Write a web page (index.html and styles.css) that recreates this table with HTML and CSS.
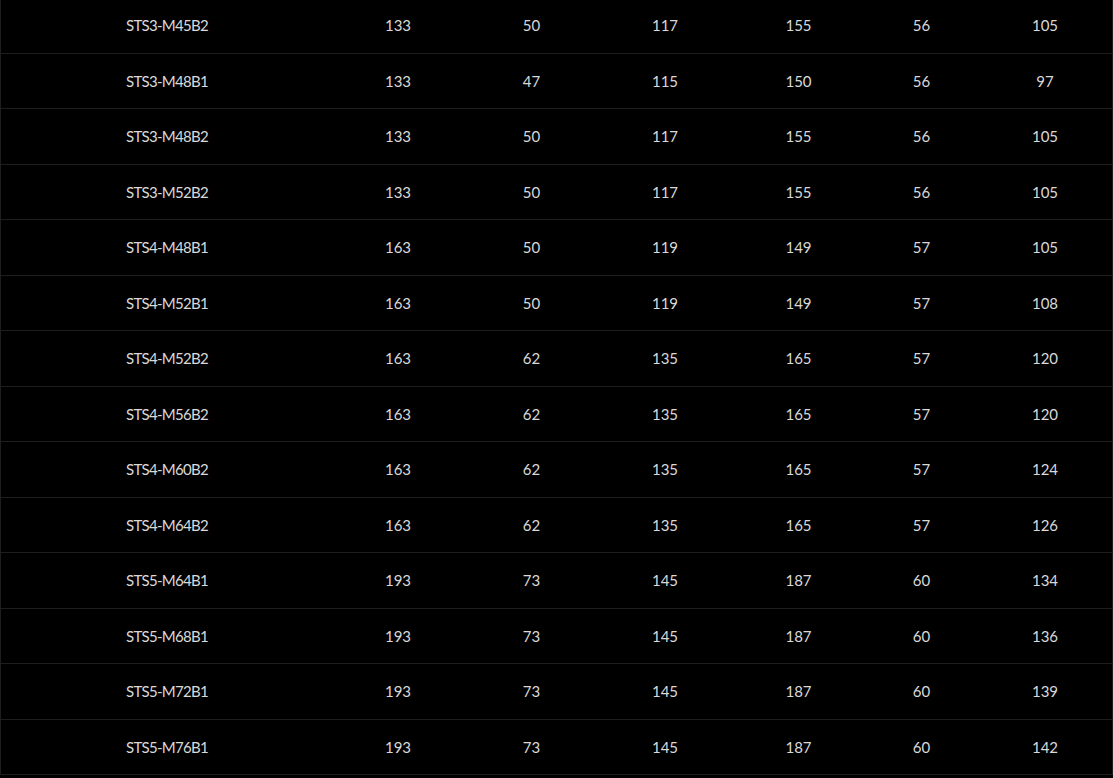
FILE: index.html
```html
<!DOCTYPE html>
<html>
<head>
<meta charset="utf-8">
<link rel="stylesheet" href="styles.css">
</head>
<body>
<div class="table">
  <div class="row"><div class="name">STS3-M45B2</div><div>133</div><div>50</div><div>117</div><div>155</div><div>56</div><div>105</div></div>
  <div class="row"><div class="name">STS3-M48B1</div><div>133</div><div>47</div><div>115</div><div>150</div><div>56</div><div>97</div></div>
  <div class="row"><div class="name">STS3-M48B2</div><div>133</div><div>50</div><div>117</div><div>155</div><div>56</div><div>105</div></div>
  <div class="row"><div class="name">STS3-M52B2</div><div>133</div><div>50</div><div>117</div><div>155</div><div>56</div><div>105</div></div>
  <div class="row"><div class="name">STS4-M48B1</div><div>163</div><div>50</div><div>119</div><div>149</div><div>57</div><div>105</div></div>
  <div class="row"><div class="name">STS4-M52B1</div><div>163</div><div>50</div><div>119</div><div>149</div><div>57</div><div>108</div></div>
  <div class="row"><div class="name">STS4-M52B2</div><div>163</div><div>62</div><div>135</div><div>165</div><div>57</div><div>120</div></div>
  <div class="row"><div class="name">STS4-M56B2</div><div>163</div><div>62</div><div>135</div><div>165</div><div>57</div><div>120</div></div>
  <div class="row"><div class="name">STS4-M60B2</div><div>163</div><div>62</div><div>135</div><div>165</div><div>57</div><div>124</div></div>
  <div class="row"><div class="name">STS4-M64B2</div><div>163</div><div>62</div><div>135</div><div>165</div><div>57</div><div>126</div></div>
  <div class="row"><div class="name">STS5-M64B1</div><div>193</div><div>73</div><div>145</div><div>187</div><div>60</div><div>134</div></div>
  <div class="row"><div class="name">STS5-M68B1</div><div>193</div><div>73</div><div>145</div><div>187</div><div>60</div><div>136</div></div>
  <div class="row"><div class="name">STS5-M72B1</div><div>193</div><div>73</div><div>145</div><div>187</div><div>60</div><div>139</div></div>
  <div class="row"><div class="name">STS5-M76B1</div><div>193</div><div>73</div><div>145</div><div>187</div><div>60</div><div>142</div></div>
</div>
</body>
</html>
```
FILE: styles.css
```css
html, body {
  margin: 0;
  padding: 0;
  background: #000;
}
body {
  font-family: "Lato", "Liberation Sans", sans-serif;
  font-size: 15px;
  color: #d9d9d9;
  overflow: hidden;
}
.table {
  width: 1113px;
  box-sizing: border-box;
  border-left: 1px solid #1e1e1e;
  border-right: 1px solid #1e1e1e;
  margin-top: -2px;
}
.row {
  display: grid;
  grid-template-columns: 330px 134px 133px 134px 133px 113px 134px;
  align-items: center;
  height: 55.5px;
  box-sizing: border-box;
  border-bottom: 1px solid #1e1e1e;
  text-align: center;
}
.row .name {
  text-align: left;
  padding-left: 125px;
  letter-spacing: -0.7px;
}
```
